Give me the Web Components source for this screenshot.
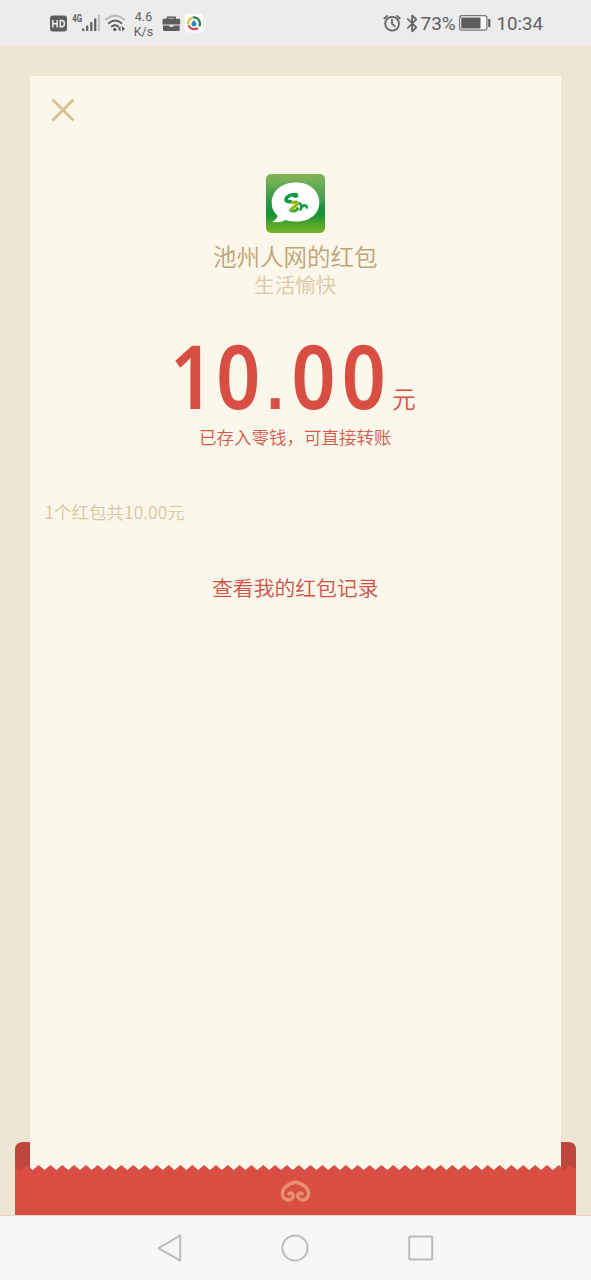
<!DOCTYPE html>
<html lang="zh-CN">
<head>
<meta charset="utf-8">
<title>红包</title>
<style>
html,body{margin:0;height:100%}
body{font-family:Roboto,"Noto Sans CJK SC",sans-serif;background:#ede6d3;overflow:hidden}
</style>
</head>
<body>
<packet-screen></packet-screen>
<script>
const define=(name,html)=>customElements.define(name,class extends HTMLElement{
  constructor(){super();this.attachShadow({mode:'open'}).innerHTML=html;}
});

define('status-bar',`
<style>
:host{display:flex;box-sizing:border-box;height:46px;background:#ececed;color:#5f5f5f;padding:0 48px 0 50px;align-items:center;justify-content:space-between}
.g{display:flex;align-items:center}
svg{display:block;flex:none}
.speed{font-size:12.5px;line-height:15px;text-align:center;width:22px;margin:2px 7px 0 5.500px;white-space:nowrap}
.pct{font-size:19px;line-height:24px;margin:2px 5px 0 1px;width:34px;white-space:nowrap}
.time{font-size:18.700px;line-height:24px;margin:2px 0 0 4px;white-space:nowrap}
</style>
<div class="g">
<svg width="77" height="24" viewBox="50 11 77 24">
<rect x="50" y="15.500" width="17" height="16" rx="3" fill="#5d5d5d"/>
<path d="M52.800 20v7.500M57.200 20v7.500M52.800 23.700h4.400M60.300 20.600v6.200h1.500q2.600 0 2.600-3.100t-2.600-3.100z" fill="none" stroke="#eee" stroke-width="1.500"/>
<text x="72.300" y="22.300" font-size="10.500" font-weight="700" textLength="10" lengthAdjust="spacingAndGlyphs" fill="#5f5f5f">4G</text>
<path d="M83.200 28.500v2.500M87.200 25.500V31M91.300 22V31M95.200 18.500V31" stroke="#5f5f5f" stroke-width="2.200"/>
<path d="M98.900 15v16" stroke="#c3c3c3" stroke-width="2.200"/>
<g fill="none" stroke-linecap="round" stroke-width="1.900"><path d="M106 19.600q9-7.500 18 0" stroke="#b8b8b8"/><path d="M108.700 23.200q6.500-5.200 12.800 0M111.700 26.500q3.300-2.400 6.500 0" stroke="#5f5f5f"/></g>
<circle cx="114.800" cy="29.400" r="1.700" fill="#5f5f5f"/>
<path d="M120.500 26v5.500l-2.700-2.700zM122 26v5.500l3-2.700z" fill="#5f5f5f"/>
</svg>
<div class="speed">4.6<br>K/s</div>
<svg width="42" height="22" viewBox="162 12 42 22">
<path d="M167.500 19.500v-2.200h7.500v2.200" fill="none" stroke="#5d5d5d" stroke-width="1.700"/>
<path d="M163.500 18.800h15.500q1.200 0 1.200 1.200v4.500H162.500V20q0-1.200 1-1.200zM163 25.500h6.500v1.300h4v-1.300h6.200v4.300q0 1.200-1.200 1.200H164.200q-1.200 0-1.200-1.200z" fill="#5d5d5d"/>
<rect x="184.800" y="14" width="18.500" height="18.500" rx="3.500" fill="#fff"/>
<g fill="none" stroke-width="2.200"><path d="M192.500 17.600a6 6 0 0 0-4.200 6.800" stroke="#e0b62a"/><path d="M188.500 25.300a6.100 6.100 0 0 0 9.500 2.500" stroke="#d64545"/><path d="M192.800 17.500a6.100 6.100 0 0 1 6.500 8.700" stroke="#278348"/></g><circle cx="193.900" cy="24" r="2.500" fill="#3188bc"/><path d="m191.500 23.500 2.500-4 1.500 3z" fill="#3188bc"/>
</svg>
</div>
<div class="g">
<svg width="36" height="22" viewBox="383 12 36 22" fill="none" stroke="#5f5f5f" stroke-width="1.700" stroke-linecap="round">
<circle cx="392.100" cy="23.700" r="6.900"/><path d="M392 19.700v4.200l2.800 2.300M384.300 18.500l3-2.700M396.900 15.800l3 2.700"/>
<path d="m407.800 19 8.500 8.400-4.200 3.900V15.500l4.200 3.800-8.500 8.700" stroke-linejoin="round"/>
</svg>
<span class="pct">73%</span>
<svg width="33" height="16" viewBox="460 15 33 16"><rect x="460.600" y="15.700" width="27.300" height="14.500" rx="2.200" fill="#f8f8f8" stroke="#777" stroke-width="1.200"/><rect x="462.200" y="17.500" width="19.300" height="11" fill="#5d5d5d"/><path d="M490.300 19v8" stroke="#5d5d5d" stroke-width="2.200"/></svg>
<span class="time">10:34</span>
</div>`);

define('sender-avatar',`
<style>:host{display:block;width:59px;height:59px}svg{display:block}</style>
<svg width="59" height="59" viewBox="0 0 59 59">
<defs><linearGradient id="g" x1="0" y1="0" x2="0" y2="1"><stop offset="0" stop-color="#79af4b"/><stop offset=".25" stop-color="#55a24a"/><stop offset=".52" stop-color="#249342"/><stop offset=".68" stop-color="#149136"/><stop offset=".84" stop-color="#4fa62a"/><stop offset="1" stop-color="#76b32c"/></linearGradient></defs>
<rect width="59" height="59" rx="5" fill="url(#g)"/>
<path d="M0 10V5q0-5 5-5h49q5 0 5 5v23Q35 34 0 10z" fill="#fff" opacity=".07"/>
<path d="M30 8.500C44 8.500 53.300 17 53.300 28.500S44 47.600 30 47.600q-6 0-10.500-1.600Q14 49.300 6.500 48q4-2.200 5.300-6Q5.700 37 5.700 28.500C5.700 17 16 8.500 30 8.500z" fill="#fff"/>
<path d="M29.500 21c-4-1-8.800 1.200-9.500 4-.4 2 2.200 3 4.500 2.500" fill="none" stroke="#139b49" stroke-width="3.600" stroke-linecap="round"/>
<ellipse cx="29.500" cy="21.300" rx="2.800" ry="2.600" fill="#139b49"/>
<path d="M24.500 36.300c2.500 1.200 5.500.8 7-1.500" fill="none" stroke="#3ba53a" stroke-width="3.200" stroke-linecap="round"/>
<path d="M26.500 28.500c5.200-1.500 6 1 3 3.400-2.500 1.700-3.800 2.500-4.300 3.800" fill="none" stroke="#93b61c" stroke-width="3.200" stroke-linecap="round"/>
<path d="M33.500 29.500c2.200.8 2 3.500 1 6 1.200-3 3-4.400 5-4 1 .2 1.300 1 1.200 2" fill="none" stroke="#159c43" stroke-width="2.600" stroke-linecap="round" stroke-linejoin="round"/>
</svg>`);

define('packet-amount',`
<style>
:host{display:grid;grid-template-columns:212px auto;column-gap:6px;width:242px;align-items:start;height:90px;color:#d94e43;white-space:nowrap}
.n{font:600 88px/90px "Noto Sans","Open Sans",sans-serif;letter-spacing:7px;transform:scaleX(.875);transform-origin:0 0;margin:-2px 0 0 -4px}
.n ::slotted(b){font:700 72px/1 "Liberation Sans",sans-serif;letter-spacing:8.700px}
.n ::slotted(i){font-style:normal;letter-spacing:2.500px}
.u{font-size:23.500px;font-weight:350;line-height:30px;margin-top:53px}
</style><span class="n"><slot></slot></span><span class="u"><slot name="unit"></slot></span>`);

define('packet-card',`
<style>
:host{display:flex;flex-direction:column;align-items:center;box-sizing:border-box;background:#fbf7ea;padding-top:22px}
.close{align-self:flex-start;margin-left:21px;display:block}
sender-avatar{margin-top:51.500px}
.name,.wish,.saved,.total,.record{white-space:nowrap;font-weight:350}
.name{font-size:23.500px;line-height:30px;color:#bfa376;margin-top:10.500px}
.wish{font-size:20.600px;line-height:26px;color:#d9c8a3;margin-top:0}
packet-amount{margin-top:33px}
.saved{font-size:17.500px;line-height:24px;color:#d4584d;margin-top:4px}
.total{font-family:"Noto Sans CJK SC",sans-serif;font-size:17.500px;line-height:24px;color:#d7c6a1;margin:50px 0 0 15px;align-self:flex-start}
.record{font-size:20.800px;line-height:28px;color:#cf5047;margin-top:51px}
</style>
<svg class="close" width="24" height="24" viewBox="0 0 24 24"><path d="m1.500 1.500 21 21m0-21-21 21" stroke="#dbbf8d" stroke-width="2.800"/></svg>
<sender-avatar></sender-avatar>
<div class="name">池州人网的红包</div>
<div class="wish">生活愉快</div>
<packet-amount><i>1</i>0<b>.</b>0<i>0</i><span slot="unit">元</span></packet-amount>
<div class="saved">已存入零钱，可直接转账</div>
<div class="total">1个红包共10.00元</div>
<div class="record">查看我的红包记录</div>`);

define('packet-pocket',`
<style>:host{display:block;height:74px}svg{display:block}</style>
<svg width="561" height="74" viewBox="0 0 561 74">
<path d="M0 30V8q0-8 8-8h7v30zM546 0h7q8 0 8 8v22h-15z" fill="#bf463c"/>
<path id="edge" fill="#d94e43"/>
<g fill="none" stroke="#e7906f" stroke-width="3.500" stroke-linecap="round" stroke-linejoin="round"><path d="M280.500 40C270 43 267.500 48 267.500 51.500C267.500 58 275 59.500 277.800 55.800c1.600-3-1.200-6-3.900-4.100M280.500 40C291 43 293.500 48 293.500 51.500C293.500 58 286 59.500 283.200 55.800c-1.600-3 1.200-6 3.900-4.100"/></g>
</svg>`);

define('nav-bar',`
<style>:host{display:grid;grid-template-columns:repeat(3,125.500px);justify-content:center;align-items:center;justify-items:center;height:65px;background:#f7f7f7}svg{display:block;margin:0 1px 1px 0}</style>
<svg width="28" height="30" viewBox="0 0 28 30"><path d="M2.500 15.200 24.200 2.500v25.200z" fill="none" stroke="#bbb" stroke-width="2" stroke-linejoin="round"/></svg>
<svg width="30" height="30" viewBox="0 0 30 30"><circle cx="15" cy="15" r="12.600" fill="none" stroke="#bbb" stroke-width="2"/></svg>
<svg width="30" height="30" viewBox="0 0 30 30"><rect x="3.200" y="3.500" width="23" height="23" rx="1" fill="none" stroke="#bbb" stroke-width="2"/></svg>`);

define('packet-screen',`
<style>
:host{display:flex;flex-direction:column;width:591px;height:1280px;background:#ede6d3}
main{height:1169px;display:grid;grid-template-rows:30px 1066px 73px;grid-template-columns:15px 14.500px 531.500px 15px 15px}
packet-card{grid-row:2/4;grid-column:3;height:1095px}
packet-pocket{grid-row:3;grid-column:2/5;overflow:hidden;height:73px}
nav-bar{border-top:1px solid #f3cfca;box-sizing:border-box}
</style>
<status-bar></status-bar>
<main><packet-card></packet-card><packet-pocket></packet-pocket></main>
<nav-bar></nav-bar>`);

// Saw-tooth upper edge of the pocket.
const pocket=document.querySelector('packet-screen').shadowRoot.querySelector('packet-pocket');
const pitch=11.82;
let d='M0 74V23';
for(let x=0;x<561;x+=pitch)d+=`L${x} 23L${Math.min(561,x+pitch/2)} 28`;
pocket.shadowRoot.getElementById('edge').setAttribute('d',d+'V74Z');
</script>
</body>
</html>
